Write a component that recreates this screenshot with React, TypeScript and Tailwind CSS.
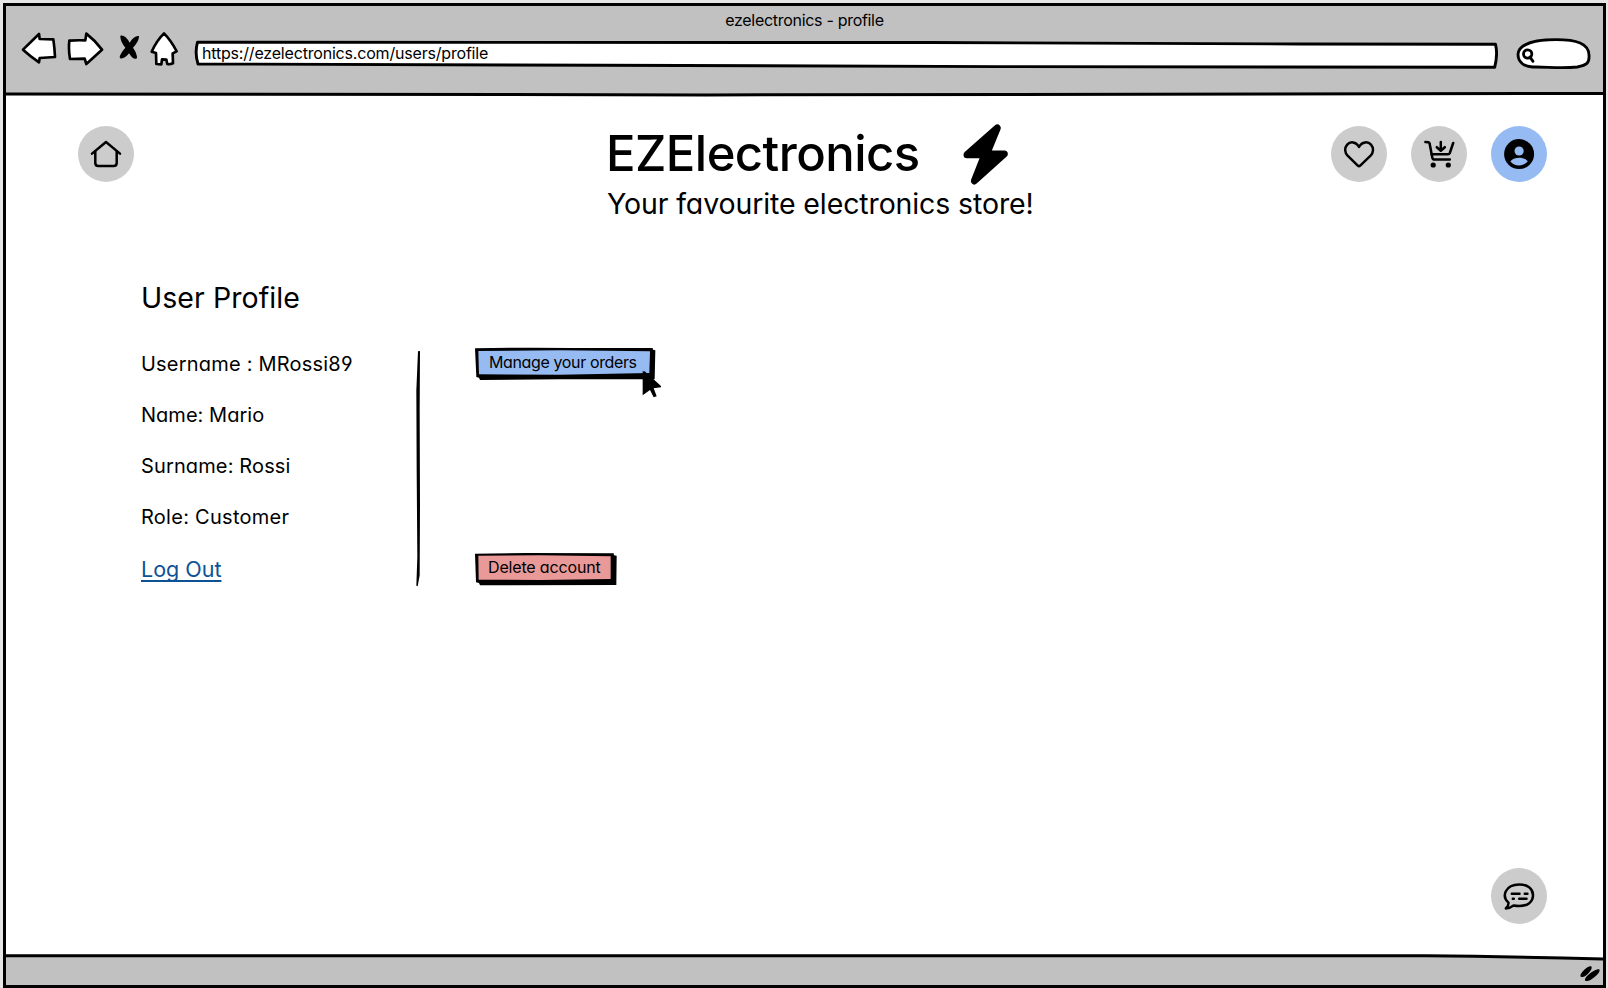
import React from "react";

const ink = {
  stroke: "#000",
  strokeLinejoin: "round" as const,
  strokeLinecap: "round" as const,
};

function BackArrow() {
  return (
    <svg className="ml-[15px] mt-px h-8 w-9 shrink-0" viewBox="63 96 108 96" fill="#fff" strokeWidth="8" {...ink}>
      <path d="M69 149 L117 102 L119 117 L160 118 Q164 145 165 171 L119 174 L117 187 Q92 170 69 149 Z" />
    </svg>
  );
}

function ForwardArrow() {
  return (
    <svg className="ml-[10px] mt-px h-[34px] w-[37px] shrink-0" viewBox="203 96 111 102" fill="#fff" strokeWidth="8" {...ink}>
      <path d="M210 122 Q232 120 258 121 L261 101 Q288 122 308 149 L261 192 L256 176 L212 177 Q207 150 210 122 Z" />
    </svg>
  );
}

function StopIcon() {
  return (
    <svg className="ml-[15px] mt-[2px] h-7 w-[21px] shrink-0" viewBox="357 99 63 84" fill="#000">
      <path d="M361 107 Q375 103 389 128 Q402 106 417 108 Q418 122 399 143 Q411 160 411 174 Q402 183 387 160 Q374 178 360 175 Q356 166 376 143 Q360 124 361 107 Z" />
    </svg>
  );
}

function HomeArrow() {
  return (
    <svg className="ml-[9px] h-9 w-[30px] shrink-0" viewBox="448 92 90 108" fill="#fff" strokeWidth="8" {...ink}>
      <path d="M493 99 Q514 120 531 153 L519 159 L520 189 Q511 193 503 191 L500 178 L487 177 L485 192 L470 191 L469 158 L456 154 Q470 122 493 99 Z" />
    </svg>
  );
}

function TopBar() {
  return (
    <header className="flex h-[87px] flex-col bg-[#c1c1c1]">
      <div className="mt-[4px] h-5 text-center text-[16px] leading-5 tracking-[-0.3px]">ezelectronics - profile</div>
      <div className="flex items-start pt-[1px]">
        <BackArrow />
        <ForwardArrow />
        <StopIcon />
        <HomeArrow />
        <div className="relative ml-[13px] mt-[8px] h-[30px] w-[1306px] shrink-0">
          <svg className="absolute inset-0 h-full w-full" viewBox="192 39 1306 30" fill="#fff" strokeWidth="2.9" {...ink}>
            <path d="M197.5 42.2 L930 42.5 L1300 44 L1495.5 44.3 Q1498 54 1494.7 67.3 L1000 66.6 L600 65.2 L198 64 Q194.5 53 197.5 42.2 Z" />
          </svg>
          <span className="relative block pl-[10px] text-[16px] leading-[28px] tracking-[-0.19px]">
            https://ezelectronics.com/users/profile
          </span>
        </div>
        <svg className="ml-[17px] mt-[7px] h-8 w-[77px] shrink-0" viewBox="345 114 231 96" fill="#fff" strokeWidth="8.5" {...ink}>
          <path d="M354 163 C356 130 410 119 468 119 C530 119 566 130 567 165 C569 190 560 195 532 201 C480 206 440 200 398 201 C370 199 354 185 354 163 Z" />
          <circle cx="383" cy="162" r="12.5" fill="none" />
          <path d="M390 171 L399 184" />
        </svg>
      </div>
    </header>
  );
}

function RoundButton({ active, label, children }: { active?: boolean; label: string; children: React.ReactNode }) {
  return (
    <button
      aria-label={label}
      className={`h-14 w-14 shrink-0 rounded-full ${active ? "bg-[#96bbf3]" : "bg-[#cccccc]"}`}
    >
      <svg className="h-14 w-14" viewBox="0 0 56 56" fill="none" strokeWidth="2.5" {...ink}>
        {children}
      </svg>
    </button>
  );
}

function Brand() {
  return (
    <div className="ml-[472px] w-[461px]">
      <div className="flex">
        <h1 className="w-[354px] whitespace-nowrap text-[49px] font-medium leading-[58px] tracking-[-0.55px]">EZElectronics</h1>
        <svg className="-mt-[3px] h-[65px] w-[52px]" viewBox="1110 65 156 195" fill="#000" strokeWidth="21" {...ink}>
          <path d="M1222 83 L1190 161 L1243 161 L1153 242 L1184 163 L1131 163 Z" />
        </svg>
      </div>
      <p className="-mt-px whitespace-nowrap pl-[1px] text-[28.5px] leading-9 tracking-[-0.12px]">Your favourite electronics store!</p>
    </div>
  );
}

function StoreHeader() {
  return (
    <div className="flex h-[106px] items-start pl-[72px] pt-[29px]">
      <RoundButton label="Home">
        <path d="M14 27.6 L28 16 L42 27.6" />
        <path d="M17.3 25.5 V37 Q17.3 40 20.3 40 H35.7 Q38.7 40 38.7 37 V25.5" />
      </RoundButton>
      <div className="-mt-[1px]">
        <Brand />
      </div>
      <div className="ml-[264px] flex gap-6">
        <RoundButton label="Favourites">
          <path d="M28 21 C25 15.2 19 15.4 16.2 18.6 C13.2 22 13.7 26.6 16.6 29.7 L26.8 39.6 Q28 40.8 29.2 39.6 L39.6 29.7 C42.5 26.6 43 22 40 18.6 C37.2 15.4 31 15.2 28 21 Z" />
        </RoundButton>
        <RoundButton label="Cart">
          <path d="M14.4 16 L17.3 16.2 Q18.4 16.4 18.6 17.6 L21.3 31.6 Q21.8 33.6 23.8 33.6 H38.8" />
          <path d="M20.6 28.3 H37 Q38.3 28.3 38.8 27 L42.2 17" />
          <path d="M29.8 16 V24.4 M25.8 21.2 L29.8 24.8 L33.8 21.2" />
          <circle cx="22.2" cy="39" r="2.6" fill="#000" stroke="none" />
          <circle cx="37.3" cy="39" r="2.6" fill="#000" stroke="none" />
        </RoundButton>
        <RoundButton label="Account" active>
          <circle cx="28.1" cy="28.1" r="15" fill="#000" stroke="none" />
          <circle cx="28.1" cy="25" r="4.6" fill="#96bbf3" stroke="none" />
          <path d="M19.4 35.2 C22 32.6 25 31.7 28.1 31.7 C31.2 31.7 34.2 32.6 36.8 35.2 C34.6 38.1 31.6 39.4 28.1 39.4 C24.6 39.4 21.6 38.1 19.4 35.2 Z" fill="#96bbf3" stroke="none" />
        </RoundButton>
      </div>
    </div>
  );
}

function ProfileDetails() {
  return (
    <div className="w-[275px] whitespace-nowrap text-[20px] leading-[30px]">
      <p className="tracking-[0.21px]">Username : MRossi89</p>
      <p className="mt-[21px] tracking-[0.03px]">Name: Mario</p>
      <p className="mt-[21px] tracking-[0.13px]">Surname: Rossi</p>
      <p className="mt-[21px] tracking-[0.27px]">Role: Customer</p>
      <a href="#" className="mt-[22px] block w-fit text-[21.5px] text-[#0d5295] underline decoration-[1.5px] underline-offset-[3px] [text-decoration-skip-ink:none]">
        Log Out
      </a>
    </div>
  );
}

function Actions() {
  return (
    <div className="flex h-[240px] flex-col justify-between">
      <button className="relative h-[34px] w-[181px] text-left">
        <svg className="absolute left-0 top-0 h-[54px] w-[189px]" viewBox="46 54 567 162">
          <path d="M46 58 Q200 55 330 57 L579 57 L580 62 L587 64 L585 151 L300 151 L61 153 L58 146 L50 144 Z" fill="#000" />
          <path d="M56 66 L300 64 L571 67 L569 132 L300 137 L58 136 Z" fill="#96bbf3" />
          <path d="M549 127 L555 127 L604 171 L604 175 L582 178 L591 202 L582 205 L571 183 L549 199 Z" fill="#000" />
        </svg>
        <span className="relative -mt-[4px] block pl-[14px] text-[16px] leading-[29px] tracking-[-0.37px]">Manage your orders</span>
      </button>
      <button className="relative h-[35px] w-[142px] text-left">
        <svg className="absolute inset-0 h-full w-full" viewBox="46 38 426 105">
          <path d="M46 43 L200 41 L462 42 L463 48 L471 49 L470 137 L61 138 L58 131 L49 129 Z" fill="#000" />
          <path d="M56 49 L240 48 L453 51 L453 119 L240 122 L57 121 Z" fill="#ea9999" />
        </svg>
        <span className="relative -mt-[4px] block pl-[13px] text-[16px] leading-[29px] tracking-[-0.16px]">Delete account</span>
      </button>
    </div>
  );
}

export default function App() {
  return (
    <div className="flex h-[988px] w-[1608px] flex-col overflow-hidden bg-[#e6e6e6] pl-[3px] pr-[2px] pt-[3px] font-[Inter,sans-serif] text-black [font-feature-settings:'cv11','ss01','cv04','calt'_0]">
      <div className="flex flex-1 flex-col border-[3px] border-black bg-white">
        <TopBar />
        <svg className="-mt-[1px] h-[5px] w-full shrink-0" viewBox="0 0 1597 5" preserveAspectRatio="none">
          <rect width="1597" height="2" fill="#c1c1c1" />
          <path d="M0 1.9 L700 2.9 L1597 1.5" fill="none" stroke="#000" strokeWidth="3" />
        </svg>
        <main className="flex flex-1 flex-col">
          <StoreHeader />
          <h2 className="ml-[135px] mt-[77px] text-[28.5px] font-normal leading-9 tracking-[0.06px]">User Profile</h2>
          <div className="ml-[135px] mt-[33px] flex items-start">
            <ProfileDetails />
            <svg className="mt-px h-[238px] w-[5px] shrink-0" viewBox="888 239 15 714" preserveAspectRatio="none">
              <path d="M894 243 L900 242 L899 420 L900 700 L899 915 L893 948 L889 946 L892 860 L890 600 L889 360 Z" fill="#000" />
            </svg>
            <div className="-mt-[2px] ml-[54px]">
              <Actions />
            </div>
          </div>
          <div className="mr-[56px] mt-auto flex justify-end pb-[30px]">
            <RoundButton label="Chat">
              <path d="M17.4 34.6 C10.5 28.5 13.8 16.4 28.3 16.4 C37.5 16.4 42 21.5 42 27.3 C42 34 36.5 38 28.5 38 Q25 38 22.5 37.5 Q19 40.2 14.8 40.5 Q18 37.5 17.4 34.6 Z" />
              <path d="M20.8 25.8 H28.5 M33.8 25.8 H36.4 M21.8 30.7 H22.8 M28.2 30.7 H35.5" />
            </RoundButton>
          </div>
        </main>
        <footer className="h-[31px] shrink-0">
          <svg className="h-full w-full" viewBox="0 0 1597 31" fill="none" stroke="#000" strokeWidth="3">
            <path d="M0 2 H1420 Q1500 2.5 1597 5 V31 H0 Z" fill="#c1c1c1" stroke="none" />
            <path d="M-2 1.8 H1420 Q1500 2.5 1599 5" />
            <path d="M1575 22 C1575 19 1583 11.5 1585 13 C1586 15.5 1578 24.5 1575 22 Z M1579.5 26 C1580 21.5 1591.5 14.5 1593 16 C1593.5 19 1582.5 28.5 1579.5 26 Z" fill="#000" strokeWidth="1.2" />
          </svg>
        </footer>
      </div>
    </div>
  );
}
